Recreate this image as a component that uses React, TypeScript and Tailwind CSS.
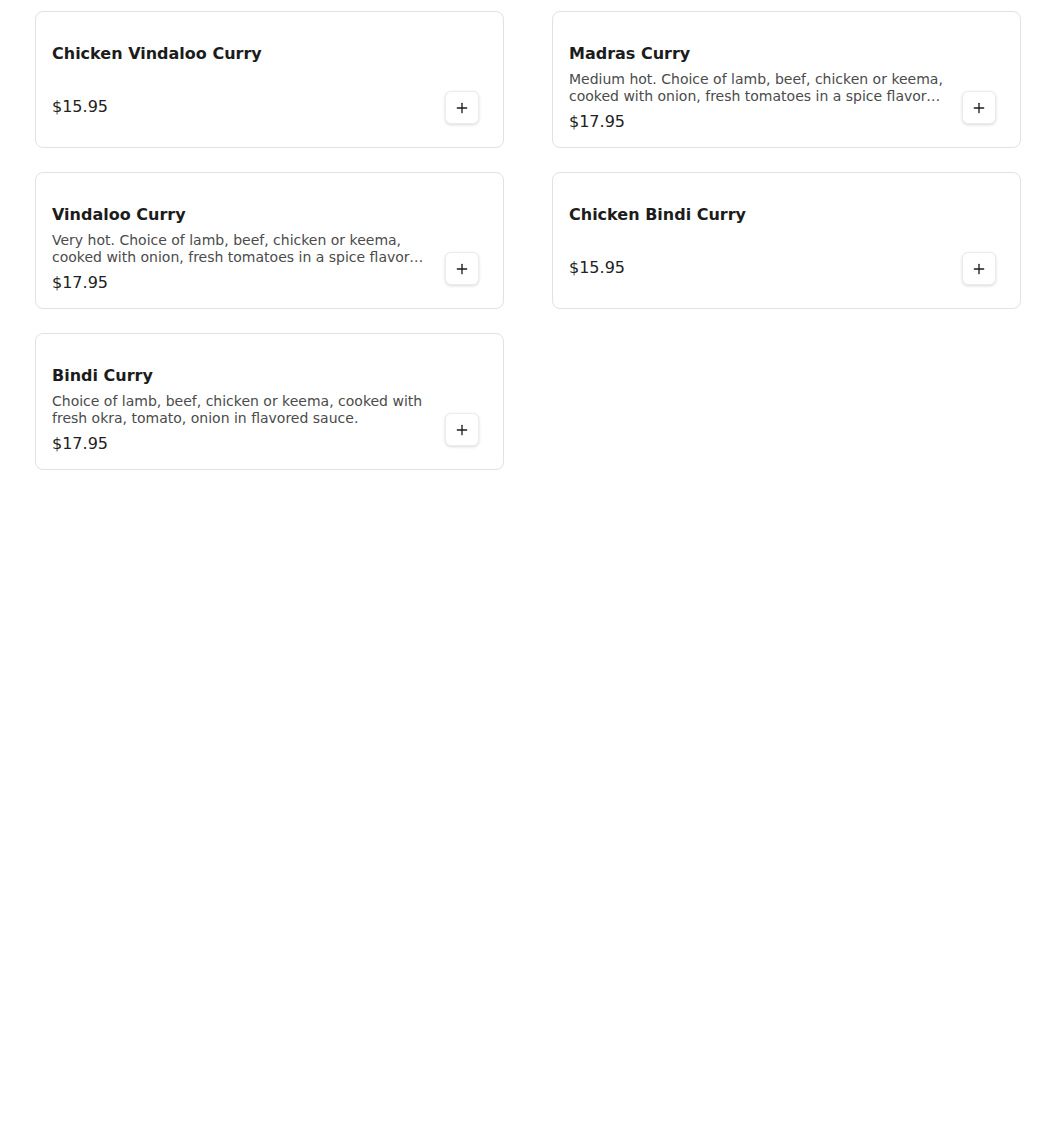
import { Plus } from 'lucide-react'

interface Item {
  name: string
  desc?: string
  price: string
}

const ITEMS: Item[] = [
  { name: 'Chicken Vindaloo Curry', price: '$15.95' },
  {
    name: 'Madras Curry',
    desc: 'Medium hot. Choice of lamb, beef, chicken or keema, cooked with onion, fresh tomatoes in a spice flavored sauce with a touch of lemon.',
    price: '$17.95',
  },
  {
    name: 'Vindaloo Curry',
    desc: 'Very hot. Choice of lamb, beef, chicken or keema, cooked with onion, fresh tomatoes in a spice flavored sauce with potatoes.',
    price: '$17.95',
  },
  { name: 'Chicken Bindi Curry', price: '$15.95' },
  {
    name: 'Bindi Curry',
    desc: 'Choice of lamb, beef, chicken or keema, cooked with fresh okra, tomato, onion in flavored sauce.',
    price: '$17.95',
  },
]

function MenuCard({ item }: { item: Item }) {
  return (
    <div className="h-[137px] flex items-start gap-4 pl-4 pr-6 pt-[30px] border border-[#e2e2e2] rounded-lg bg-white">
      <div className="flex-1 min-w-0 flex flex-col">
        <h3 className="text-base leading-6 font-bold text-[#1c1c1c]">{item.name}</h3>
        {item.desc && (
          <p className="mt-[5px] text-sm leading-[17px] text-[#4b4b4b] line-clamp-2">{item.desc}</p>
        )}
        <div className={`text-base leading-6 text-[#222] ${item.desc ? 'mt-[5px]' : 'mt-[29px]'}`}>
          {item.price}
        </div>
      </div>
      <button className="mt-[49px] w-[34px] h-[33px] shrink-0 flex items-center justify-center rounded-md border border-[#ececec] bg-white shadow-[0_1px_3px_rgba(0,0,0,0.15)] text-[#1c1c1c]">
        <Plus size={16} strokeWidth={2} />
      </button>
    </div>
  )
}

export default function App() {
  return (
    <div className="min-h-[1133px] bg-white pt-[11px] pl-[35px] font-['DejaVu_Sans',sans-serif]">
      <div className="w-[986px] grid grid-cols-2 gap-x-12 gap-y-6">
        {ITEMS.map((item) => (
          <MenuCard key={item.name} item={item} />
        ))}
      </div>
    </div>
  )
}
